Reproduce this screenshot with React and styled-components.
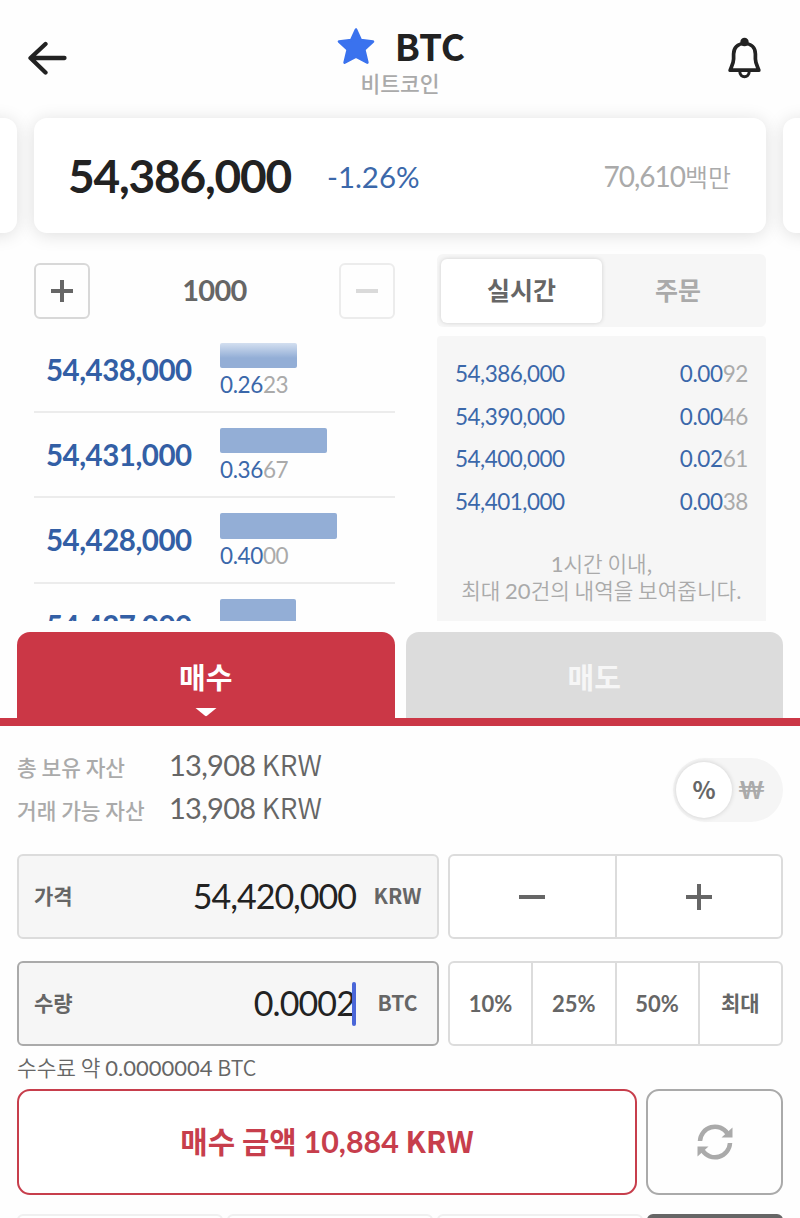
import { useState } from "react";
import styled, { createGlobalStyle } from "styled-components";

const GlobalStyle = createGlobalStyle`
  * {
    box-sizing: border-box;
  }
  body {
    margin: 0;
    background-color: #fefefe;
    font-family: "Noto Sans CJK KR", sans-serif;
    color: #666;
  }
  button {
    font-family: inherit;
    color: inherit;
    padding: 0;
    margin: 0;
    background: none;
    cursor: pointer;
  }
`;

const Container = styled.div`
  width: 800px;
  height: 1218px;
  overflow: hidden;
  background-color: #fefefe;
`;

const Num = styled.span`
  font-family: Lato, "Noto Sans CJK KR", sans-serif;
  font-size: ${(props) => props.$size}px;
  font-weight: ${(props) => props.$weight || 400};
  letter-spacing: ${(props) => props.$spacing || 0}px;
  color: ${(props) => props.$color || "inherit"};
  white-space: nowrap;
`;

const Header = styled.div`
  height: 118px;
  padding: 0 38px 0 28px;
  display: grid;
  grid-template-columns: 40px 1fr 34px;
`;

const IconButton = styled.button`
  border: none;
  height: 118px;
  display: flex;
  align-items: flex-start;
  padding-top: ${(props) => props.$top}px;
`;

const Titles = styled.div`
  display: flex;
  flex-direction: column;
  align-items: center;
  padding: 20px 0 0 4px;
`;

const TitleRow = styled.div`
  display: flex;
  align-items: center;
  gap: 20px;
  height: 52px;
  margin-left: 2px;
`;

const Title = styled.h1`
  margin: 0;
  padding-bottom: 2px;
  font-size: 37px;
  line-height: 50px;
  font-weight: 700;
  color: #222;
`;

const SubTitle = styled.div`
  font-size: 21.5px;
  line-height: 21px;
  font-weight: 500;
  color: #aaa;
`;

const Cards = styled.div`
  height: 115px;
  margin: 0 -715px;
  display: grid;
  grid-template-columns: repeat(3, 732px);
  column-gap: 17px;
`;

const Card = styled.div`
  border-radius: 13px;
  background-color: white;
  box-shadow: 0 2px 18px rgba(0, 0, 0, 0.13);
  display: flex;
  align-items: center;
  padding: 0 35px 0 34px;
`;

const Change = styled.div`
  margin-left: 36px;
  padding-top: 2px;
`;

const Volume = styled.div`
  margin-left: auto;
  display: flex;
  align-items: center;
  font-size: 25px;
  line-height: 36px;
  font-weight: 350;
  color: #aaa;
`;

const Market = styled.div`
  height: 399px;
  padding: 21px 34px 11px;
  display: grid;
  grid-template-columns: 361px 329px;
  column-gap: 42px;
`;

const Book = styled.div`
  height: 367px;
  overflow: hidden;
`;

const Stepper = styled.div`
  height: 73.5px;
  padding-top: 9px;
  display: flex;
  justify-content: space-between;
  align-items: flex-start;
`;

const StepButton = styled.button`
  width: 56px;
  height: 56px;
  border-radius: 6px;
  border: 2px solid ${(props) => (props.disabled ? "#ececec" : "#d8d8d8")};
  color: ${(props) => (props.disabled ? "#dadada" : "#666")};
  display: flex;
  align-items: center;
  justify-content: center;
`;

const StepValue = styled.div`
  line-height: 54px;
`;

const Order = styled.div`
  height: 85.4px;
  border-bottom: 2px solid #ececec;
  padding: 15px 0 0 12px;
  display: grid;
  grid-template-columns: 174px 1fr;
  line-height: 53px;
`;

const Bar = styled.div`
  height: 25.5px;
  border-radius: 2px;
  background: ${(props) =>
    props.$faded
      ? "linear-gradient(#d3dff0, #93aed6 60%)"
      : "#93aed6"};
`;

const OrderAmount = styled.div`
  line-height: 33px;
`;

const Segment = styled.div`
  height: 73px;
  padding: 5px 4px 4px;
  border-radius: 6px;
  background-color: #f6f6f6;
  display: grid;
  grid-template-columns: 161px 152px;
`;

const SegmentTab = styled.button`
  border: none;
  border-radius: 6px;
  font-size: 25px;
  line-height: 58px;
  padding-bottom: 5px;
  font-weight: 700;
  color: ${(props) => (props.$active ? "#666" : "#aaa")};
  background-color: ${(props) => (props.$active ? "white" : "transparent")};
  box-shadow: ${(props) => (props.$active ? "0 0 4px rgba(0, 0, 0, 0.16)" : "none")};
`;

const Trades = styled.div`
  margin-top: 9px;
  height: 285px;
  border-radius: 4px 4px 0 0;
  background-color: #f6f6f6;
  padding: 17px 18px 0;
`;

const Trade = styled.div`
  height: 42.7px;
  line-height: 41px;
  display: flex;
  justify-content: space-between;
`;

const Notice = styled.div`
  margin: 26px -10px 0;
  text-align: center;
  font-size: 21.3px;
  line-height: 26.5px;
  font-weight: 350;
  color: #aaa;
  white-space: nowrap;
`;

const TradeTabs = styled.div`
  height: 94px;
  border-bottom: 8px solid #cb3746;
  padding: 0 17px;
  display: grid;
  grid-template-columns: 1fr 1fr;
  column-gap: 11px;
`;

const TradeTab = styled.button`
  border: none;
  border-radius: 13px 13px 0 0;
  background-color: ${(props) => (props.$active ? "#cb3746" : "#dcdcdc")};
  color: ${(props) => (props.$active ? "white" : "#f6f6f6")};
  font-size: 29px;
  line-height: 40px;
  font-weight: 700;
  display: flex;
  flex-direction: column;
  align-items: center;
  padding-top: 24px;
  gap: 12px;
`;

const Assets = styled.div`
  height: 128px;
  padding: 18px 17px 0;
  display: flex;
  justify-content: space-between;
`;

const Asset = styled.div`
  height: 42.7px;
  display: grid;
  grid-template-columns: 152px 1fr;
  line-height: 40px;
`;

const AssetLabel = styled.span`
  padding-top: 3px;
  font-size: 21.4px;
  font-weight: 500;
  color: #aaa;
  white-space: nowrap;
`;

const AssetValue = styled.span`
  font-size: 28px;
  font-weight: 350;
  white-space: nowrap;
`;

const Switch = styled.div`
  width: 110px;
  height: 64px;
  margin-top: 14px;
  padding: 4px 3px;
  border-radius: 32px;
  background-color: #f5f5f5;
  display: flex;
  align-items: center;
`;

const Knob = styled.div`
  width: 56px;
  height: 56px;
  border-radius: 50%;
  background-color: white;
  box-shadow: 0 0 5px rgba(0, 0, 0, 0.16);
  font-size: 24px;
  line-height: 54px;
  font-weight: 700;
  text-align: center;
`;

const Won = styled.div`
  margin-left: 6px;
  line-height: 54px;
`;

const FormRow = styled.div`
  height: 85px;
  margin: 0 17px ${(props) => props.$gap}px;
  display: grid;
  grid-template-columns: 422px 335px;
  column-gap: 9px;
`;

const Field = styled.div`
  border: 2px solid ${(props) => (props.$focused ? "#aaa" : "#dcdcdc")};
  border-radius: 6px;
  background-color: #f6f6f6;
  padding: 0 0 0 15px;
  display: flex;
  align-items: center;
  font-size: 21px;
  font-weight: 700;
`;

const FieldLabel = styled.span`
  line-height: 40px;
  padding-bottom: 4px;
`;

const FieldValue = styled.div`
  flex: 1;
  height: 44px;
  line-height: 41px;
  display: flex;
  justify-content: flex-end;
`;

const Caret = styled.div`
  width: 4px;
  height: 44px;
  margin-left: -3px;
  border-radius: 2px;
  background-color: #4a66d8;
`;

const Unit = styled.span`
  width: 77px;
  margin: 0 1px 0 3px;
  padding-bottom: 4px;
  line-height: 40px;
  text-align: center;
`;

const ButtonGroup = styled.div`
  border: 2px solid #dcdcdc;
  border-radius: 6px;
  background-color: #dcdcdc;
  overflow: hidden;
  display: grid;
  grid-template-columns: repeat(${(props) => props.$count}, 1fr);
  column-gap: 2px;
`;

const GroupButton = styled.button`
  border: none;
  background-color: white;
  display: flex;
  align-items: center;
  justify-content: center;
  font-size: 21px;
  font-weight: 700;
`;

const MaxLabel = styled.span`
  padding-bottom: 4px;
`;

const Fee = styled.div`
  height: 43px;
  padding: 1px 17px 0;
  line-height: 40px;
  font-size: 21.4px;
  font-weight: 350;
  white-space: nowrap;
`;

const SubmitRow = styled.div`
  height: 106px;
  margin: 0 17px 19px;
  display: grid;
  grid-template-columns: 620px 137px;
  column-gap: 9px;
`;

const Submit = styled.button`
  border: 2px solid #c73e4c;
  border-radius: 13px;
  background-color: white;
  color: #c73e4c;
  font-size: 29.8px;
  font-weight: 700;
  line-height: 40px;
  padding-bottom: 4px;
`;

const Refresh = styled.button`
  border: 2px solid #aaa;
  border-radius: 13px;
  display: flex;
  align-items: center;
  justify-content: center;
`;

const NextRow = styled.div`
  margin: 0 17px;
  display: grid;
  grid-template-columns: 206px 206px 206px 136px;
  justify-content: space-between;
`;

const NextBox = styled.div`
  height: 40px;
  border-radius: 6px;
  border: 2px solid ${(props) => (props.$dark ? "#666" : "#f0f0f0")};
  background-color: ${(props) => (props.$dark ? "#666" : "white")};
`;

const BLUE = "#3b68aa";

const orders = [
  { price: "54,438,000", amount: "0.26", rest: "23", width: 77 },
  { price: "54,431,000", amount: "0.36", rest: "67", width: 107 },
  { price: "54,428,000", amount: "0.40", rest: "00", width: 117 },
  { price: "54,427,000", width: 76 },
];

const trades = [
  { price: "54,386,000", amount: "0.00", rest: "92" },
  { price: "54,390,000", amount: "0.00", rest: "46" },
  { price: "54,400,000", amount: "0.02", rest: "61" },
  { price: "54,401,000", amount: "0.00", rest: "38" },
];

const Plus = ({ size, stroke }) => (
  <svg width={size} height={size} viewBox={`0 0 ${size} ${size}`}>
    <path
      d={`M0 ${size / 2}H${size}M${size / 2} 0V${size}`}
      stroke="currentColor"
      strokeWidth={stroke}
    />
  </svg>
);

const Minus = ({ size, stroke }) => (
  <svg width={size} height={size} viewBox={`0 0 ${size} ${size}`}>
    <path d={`M0 ${size / 2}H${size}`} stroke="currentColor" strokeWidth={stroke} />
  </svg>
);

const App = () => {
  const [tab, setTab] = useState("live");
  const [side, setSide] = useState("buy");

  return (
    <Container>
      <GlobalStyle />
      <Header>
        <IconButton $top={41}>
          <svg width="40" height="34" viewBox="0 0 40 34" fill="none">
            <path
              d="M36.5 17H3M17.5 3L2.5 17L17.5 31.5"
              stroke="#222"
              strokeWidth="4.3"
              strokeLinecap="round"
              strokeLinejoin="round"
            />
          </svg>
        </IconButton>
        <Titles>
          <TitleRow>
            <svg width="38" height="38" viewBox="0 0 38 38">
              <path
                d="M19 2.5L23.8 13.1L36 14.5L27.3 22.6L30.4 35.6L19 29.6L7.6 35.6L10.7 22.6L2 14.5L14.2 13.1Z"
                fill="#3a72ee"
                stroke="#3a72ee"
                strokeWidth="2.6"
                strokeLinejoin="round"
              />
            </svg>
            <Title>BTC</Title>
          </TitleRow>
          <SubTitle>비트코인</SubTitle>
        </Titles>
        <IconButton $top={37}>
          <svg width="34" height="43" viewBox="0 0 34 43" fill="none">
            <circle cx="16.5" cy="5" r="4.2" fill="#222" />
            <path
              d="M16.5 6.5C9.5 6.5 5.6 11 5.6 17V22C5.6 26 3.8 29 2.2 33.2H30.8C29.2 29 27.4 26 27.4 22V17C27.4 11 23.5 6.5 16.5 6.5Z"
              stroke="#222"
              strokeWidth="3.7"
              strokeLinejoin="round"
            />
            <path d="M11.8 34.5C11.8 41.4 21.2 41.4 21.2 34.5" stroke="#222" strokeWidth="3" />
          </svg>
        </IconButton>
      </Header>

      <Cards>
        <Card />
        <Card>
          <Num $size={46} $weight={700} $spacing={-1.2} $color="#222">
            54,386,000
          </Num>
          <Change>
            <Num $size={29.4} $color={BLUE}>
              -1.26%
            </Num>
          </Change>
          <Volume>
            <Num $size={28} $spacing={-1}>
              70,610
            </Num>
            백만
          </Volume>
        </Card>
        <Card />
      </Cards>

      <Market>
        <Book>
          <Stepper>
            <StepButton>
              <Plus size={22} stroke={4} />
            </StepButton>
            <StepValue>
              <Num $size={29} $weight={700} $spacing={-0.7}>
                1000
              </Num>
            </StepValue>
            <StepButton disabled>
              <Minus size={22} stroke={4} />
            </StepButton>
          </Stepper>
          {orders.map((order, i) => (
            <Order key={order.price}>
              <Num $size={29.5} $weight={700} $spacing={-0.5} $color="#335fa5">
                {order.price}
              </Num>
              <div>
                <Bar $faded={i === 0} style={{ width: order.width }} />
                {order.amount && (
                  <OrderAmount>
                    <Num $size={22.5} $spacing={-0.4} $color={BLUE}>
                      {order.amount}
                    </Num>
                    <Num $size={22.5} $spacing={-0.4} $color="#aaa">
                      {order.rest}
                    </Num>
                  </OrderAmount>
                )}
              </div>
            </Order>
          ))}
        </Book>
        <div>
          <Segment>
            <SegmentTab $active={tab === "live"} onClick={() => setTab("live")}>
              실시간
            </SegmentTab>
            <SegmentTab $active={tab === "orders"} onClick={() => setTab("orders")}>
              주문
            </SegmentTab>
          </Segment>
          <Trades>
            {trades.map((trade) => (
              <Trade key={trade.price}>
                <Num $size={22.5} $spacing={-0.5} $color={BLUE}>
                  {trade.price}
                </Num>
                <div>
                  <Num $size={22.5} $spacing={-0.4} $color={BLUE}>
                    {trade.amount}
                  </Num>
                  <Num $size={22.5} $spacing={-0.4} $color="#aaa">
                    {trade.rest}
                  </Num>
                </div>
              </Trade>
            ))}
            <Notice>
              <Num $size={22}>1</Num>시간 이내,
              <br />
              최대 <Num $size={22}>20</Num>건의 내역을 보여줍니다.
            </Notice>
          </Trades>
        </div>
      </Market>

      <TradeTabs>
        <TradeTab $active={side === "buy"} onClick={() => setSide("buy")}>
          매수
          {side === "buy" && (
            <svg width="22" height="9" viewBox="0 0 22 9">
              <path d="M0.5 0H21.5L12 7.8Q11 8.6 10 7.8Z" fill="white" />
            </svg>
          )}
        </TradeTab>
        <TradeTab $active={side === "sell"} onClick={() => setSide("sell")}>
          매도
        </TradeTab>
      </TradeTabs>

      <Assets>
        <div>
          <Asset>
            <AssetLabel>총 보유 자산</AssetLabel>
            <AssetValue>
              <Num $size={29} $spacing={-0.7}>
                13,908
              </Num>{" "}
              KRW
            </AssetValue>
          </Asset>
          <Asset>
            <AssetLabel>거래 가능 자산</AssetLabel>
            <AssetValue>
              <Num $size={29} $spacing={-0.7}>
                13,908
              </Num>{" "}
              KRW
            </AssetValue>
          </Asset>
        </div>
        <Switch>
          <Knob>%</Knob>
          <Won>
            <Num $size={25} $weight={700} $color="#aaa">
              ₩
            </Num>
          </Won>
        </Switch>
      </Assets>

      <FormRow $gap={22}>
        <Field>
          <FieldLabel>가격</FieldLabel>
          <FieldValue>
            <Num $size={34} $spacing={-1} $color="#222">
              54,420,000
            </Num>
          </FieldValue>
          <Unit>KRW</Unit>
        </Field>
        <ButtonGroup $count={2}>
          <GroupButton>
            <Minus size={26} stroke={4} />
          </GroupButton>
          <GroupButton>
            <Plus size={26} stroke={4} />
          </GroupButton>
        </ButtonGroup>
      </FormRow>

      <FormRow $gap={0}>
        <Field $focused>
          <FieldLabel>수량</FieldLabel>
          <FieldValue>
            <Num $size={34} $spacing={-0.9} $color="#222">
              0.0002
            </Num>
            <Caret />
          </FieldValue>
          <Unit>BTC</Unit>
        </Field>
        <ButtonGroup $count={4}>
          {["10%", "25%", "50%"].map((p) => (
            <GroupButton key={p}>
              <Num $size={22} $weight={700}>
                {p}
              </Num>
            </GroupButton>
          ))}
          <GroupButton>
            <MaxLabel>최대</MaxLabel>
          </GroupButton>
        </ButtonGroup>
      </FormRow>

      <Fee>
        수수료 약 <Num $size={22}>0.0000004</Num> BTC
      </Fee>

      <SubmitRow>
        <Submit>
          매수 금액{" "}
          <Num $size={30.4} $weight={700}>
            10,884
          </Num>{" "}
          KRW
        </Submit>
        <Refresh>
          <svg width="36" height="36" viewBox="0 0 36 36" fill="none">
            <path
              d="M3 17A15 15 0 0 1 30.5 9.5M33 19A15 15 0 0 1 5.5 26.5"
              stroke="#aaa"
              strokeWidth="4.5"
            />
            <path d="M35.5 3.5V13.5H24.5ZM0.5 32.5V22.5H11.5Z" fill="#aaa" />
          </svg>
        </Refresh>
      </SubmitRow>

      <NextRow>
        <NextBox />
        <NextBox />
        <NextBox />
        <NextBox $dark />
      </NextRow>
    </Container>
  );
};

export default App;
